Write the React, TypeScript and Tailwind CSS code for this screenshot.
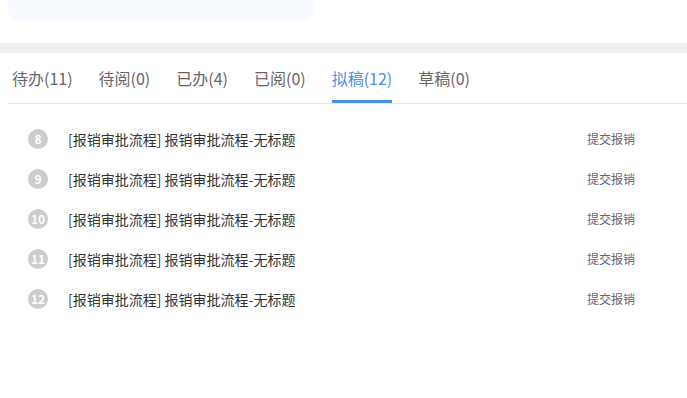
const tabs = [
  { label: "待办(11)" },
  { label: "待阅(0)" },
  { label: "已办(4)" },
  { label: "已阅(0)" },
  { label: "拟稿(12)", active: true },
  { label: "草稿(0)" },
];

const rows = [8, 9, 10, 11, 12];

export default function App() {
  return (
    <div
      className="w-[687px] h-[398px] bg-white overflow-hidden"
      style={{ fontFamily: '"Noto Sans CJK SC", "Noto Sans", sans-serif' }}
    >
      {/* top card, scrolled mostly out of view */}
      <div className="px-2">
        <div className="w-[306px] h-[21px] bg-[#f7faff] rounded-b-[10px]" />
      </div>
      <div className="h-[22px]" />
      <div className="h-[10px] bg-[#f0f0f0]" />

      <div className="pl-2">
        <div className="flex gap-[26px] pl-1 border-b border-[#e8e8e8]">
          {tabs.map((t) => (
            <div
              key={t.label}
              className={
                "h-[50px] flex items-center relative text-[16px] " +
                (t.active ? "text-[#4a90e2]" : "text-[#666666]")
              }
            >
              {t.label}
              {t.active && (
                <div className="absolute left-0 right-0 bottom-0 h-[3px] bg-[#4a90e2]" />
              )}
            </div>
          ))}
        </div>

        <div className="pt-[15px]">
          {rows.map((n) => (
            <div key={n} className="h-[40px] flex items-center pl-5 pr-[52px]">
              <div className="w-5 h-5 rounded-full bg-[#cccccc] text-white text-[12px] font-semibold flex items-center justify-center shrink-0">
                {n}
              </div>
              <div className="ml-5 flex-1 text-[14px] text-[#333333]">
                [报销审批流程] 报销审批流程-无标题
              </div>
              <div className="text-[12px] text-[#666666]">提交报销</div>
            </div>
          ))}
        </div>
      </div>
    </div>
  );
}
